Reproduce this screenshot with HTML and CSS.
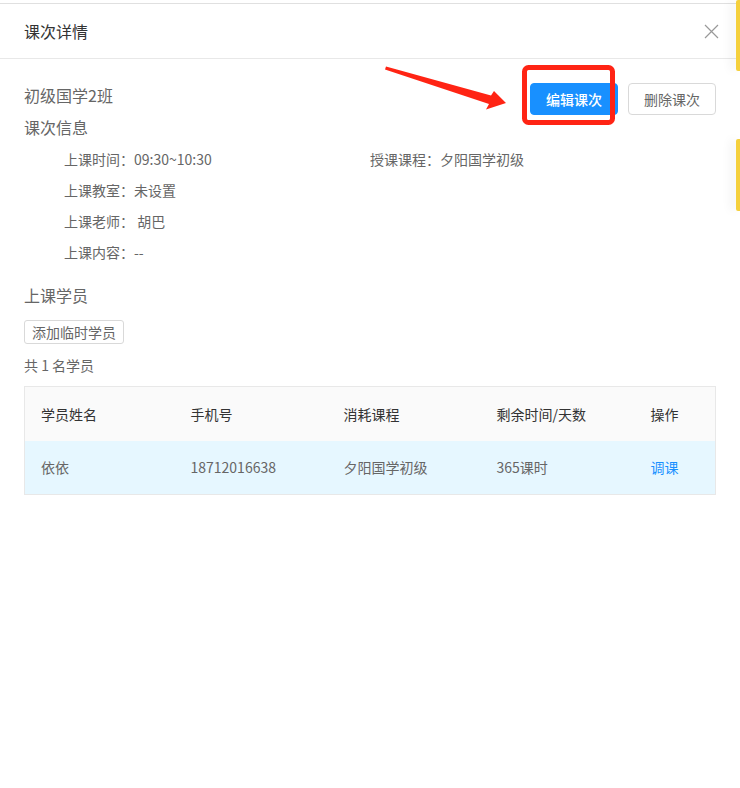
FILE: index.html
```html
<!DOCTYPE html>
<html lang="zh">
<head>
<meta charset="utf-8">
<title>课次详情</title>
<link rel="stylesheet" href="styles.css">
</head>
<body>
<div class="page">
  <div class="dialog">
    <div class="header">
      <span class="title">课次详情</span>
      <svg class="close" width="15" height="15" viewBox="0 0 15 15"><path d="M1 1 L14 14 M14 1 L1 14" stroke="#999" stroke-width="1.2" fill="none"/></svg>
    </div>
    <div class="body">
      <div class="top-row">
        <div class="class-name">初级国学2班</div>
        <div class="actions">
          <button class="btn btn-primary">编辑课次</button>
          <button class="btn btn-default">删除课次</button>
        </div>
      </div>
      <div class="section-title">课次信息</div>
      <div class="info">
        <div class="info-item">上课时间：09:30~10:30</div>
        <div class="info-item">授课课程：夕阳国学初级</div>
        <div class="info-item">上课教室：未设置</div>
        <div class="info-item"></div>
        <div class="info-item">上课老师： 胡巴</div>
        <div class="info-item"></div>
        <div class="info-item">上课内容：--</div>
        <div class="info-item"></div>
      </div>
      <div class="section-title students-title">上课学员</div>
      <button class="btn-small">添加临时学员</button>
      <div class="count">共 1 名学员</div>
      <table class="table">
        <thead>
          <tr><th class="c1">学员姓名</th><th class="c2">手机号</th><th class="c3">消耗课程</th><th class="c4">剩余时间/天数</th><th class="c5">操作</th></tr>
        </thead>
        <tbody>
          <tr><td>依依</td><td>18712016638</td><td>夕阳国学初级</td><td>365课时</td><td><a class="link">调课</a></td></tr>
        </tbody>
      </table>
    </div>
  </div>
  <div class="side-bar bar1"></div>
  <div class="side-bar bar2"></div>
  <svg class="annot" width="740" height="788" viewBox="0 0 740 788">
    <polygon points="386,66.5 491,95.5 494,91 506,103 486,109.5 489,104 385,69.5" fill="#ff2414"/>
    <rect x="524.5" y="67.5" width="88" height="55" rx="4" ry="4" fill="none" stroke="#ff2414" stroke-width="5"/>
  </svg>
</div>
</body>
</html>
```

FILE: styles.css
```css
* { box-sizing: border-box; }
html, body { margin: 0; padding: 0; background: #fff; }
body {
  font-family: "Noto Sans CJK SC", "Noto Sans", sans-serif;
  color: #666;
  font-size: 14px;
}
.page {
  position: relative;
  width: 740px;
  height: 788px;
  overflow: hidden;
  padding-top: 3px;
}
.dialog {
  width: 736px;
  height: 785px;
  border-top: 1px solid #e0e0e0;
  background: #fff;
}
.header {
  height: 55px;
  border-bottom: 1px solid #e8e8e8;
  display: flex;
  align-items: center;
  justify-content: space-between;
  padding: 0 17px 0 24px;
}
.title {
  font-size: 16px;
  color: #333;
  line-height: 24px;
}
.close { display: block; }
.body {
  padding: 24px 20px 0 24px;
}
.top-row {
  display: flex;
  justify-content: space-between;
  align-items: flex-start;
}
.class-name {
  font-size: 16px;
  line-height: 24px;
  margin-top: 0;
  color: #666;
}
.actions { display: flex; gap: 10px; }
.btn {
  height: 32px;
  font-family: inherit;
  font-size: 14px;
  border-radius: 4px;
  padding: 0 15px;
  line-height: 30px;
}
.btn-primary {
  background: #1890ff;
  border: 1px solid #1890ff;
  color: #fff;
  width: 88px;
  font-weight: 500;
}
.btn-default {
  background: #fff;
  border: 1px solid #d9d9d9;
  color: #666;
  width: 88px;
}
.section-title {
  font-size: 16px;
  line-height: 24px;
  color: #666;
}
.info {
  display: grid;
  grid-template-columns: 306px 1fr;
  padding-left: 40px;
  margin-top: 5px;
}
.info-item {
  line-height: 31px;
  height: 31px;
  font-size: 14px;
  color: #666;
}
.students-title { margin-top: 15px; }
.btn-small {
  display: block;
  margin-top: 13px;
  height: 24px;
  width: 100px;
  padding: 0;
  background: #fff;
  border: 1px solid #d9d9d9;
  border-radius: 3px;
  font-family: inherit;
  font-size: 14px;
  color: #666;
  line-height: 22px;
}
.count {
  margin-top: 11px;
  line-height: 20px;
  font-size: 14px;
  color: #666;
}
.table {
  margin-top: 11px;
  width: 692px;
  border-collapse: collapse;
  border: 1px solid #e8e8e8;
  table-layout: fixed;
}
.table th, .table td {
  text-align: left;
  padding: 0 0 0 16px;
  font-size: 14px;
  font-weight: normal;
}
.table th {
  height: 54px;
  background: #fafafa;
  color: #333;
}
.table td {
  height: 54px;
  background: #e6f7ff;
  color: #666;
}
.c1 { width: 150px; }
.c2 { width: 153px; }
.c3 { width: 153px; }
.c4 { width: 154px; }
.link { color: #1890ff; }
.side-bar {
  position: absolute;
  right: 0;
  width: 4px;
  background: #f5d03c;
  border-radius: 2px 0 0 2px;
  box-shadow: -5px 0 10px rgba(0, 0, 0, 0.08);
}
.bar1 { top: 0; height: 71px; }
.bar2 { top: 139px; height: 72px; }
.annot {
  position: absolute;
  left: 0;
  top: 0;
  pointer-events: none;
}
```
